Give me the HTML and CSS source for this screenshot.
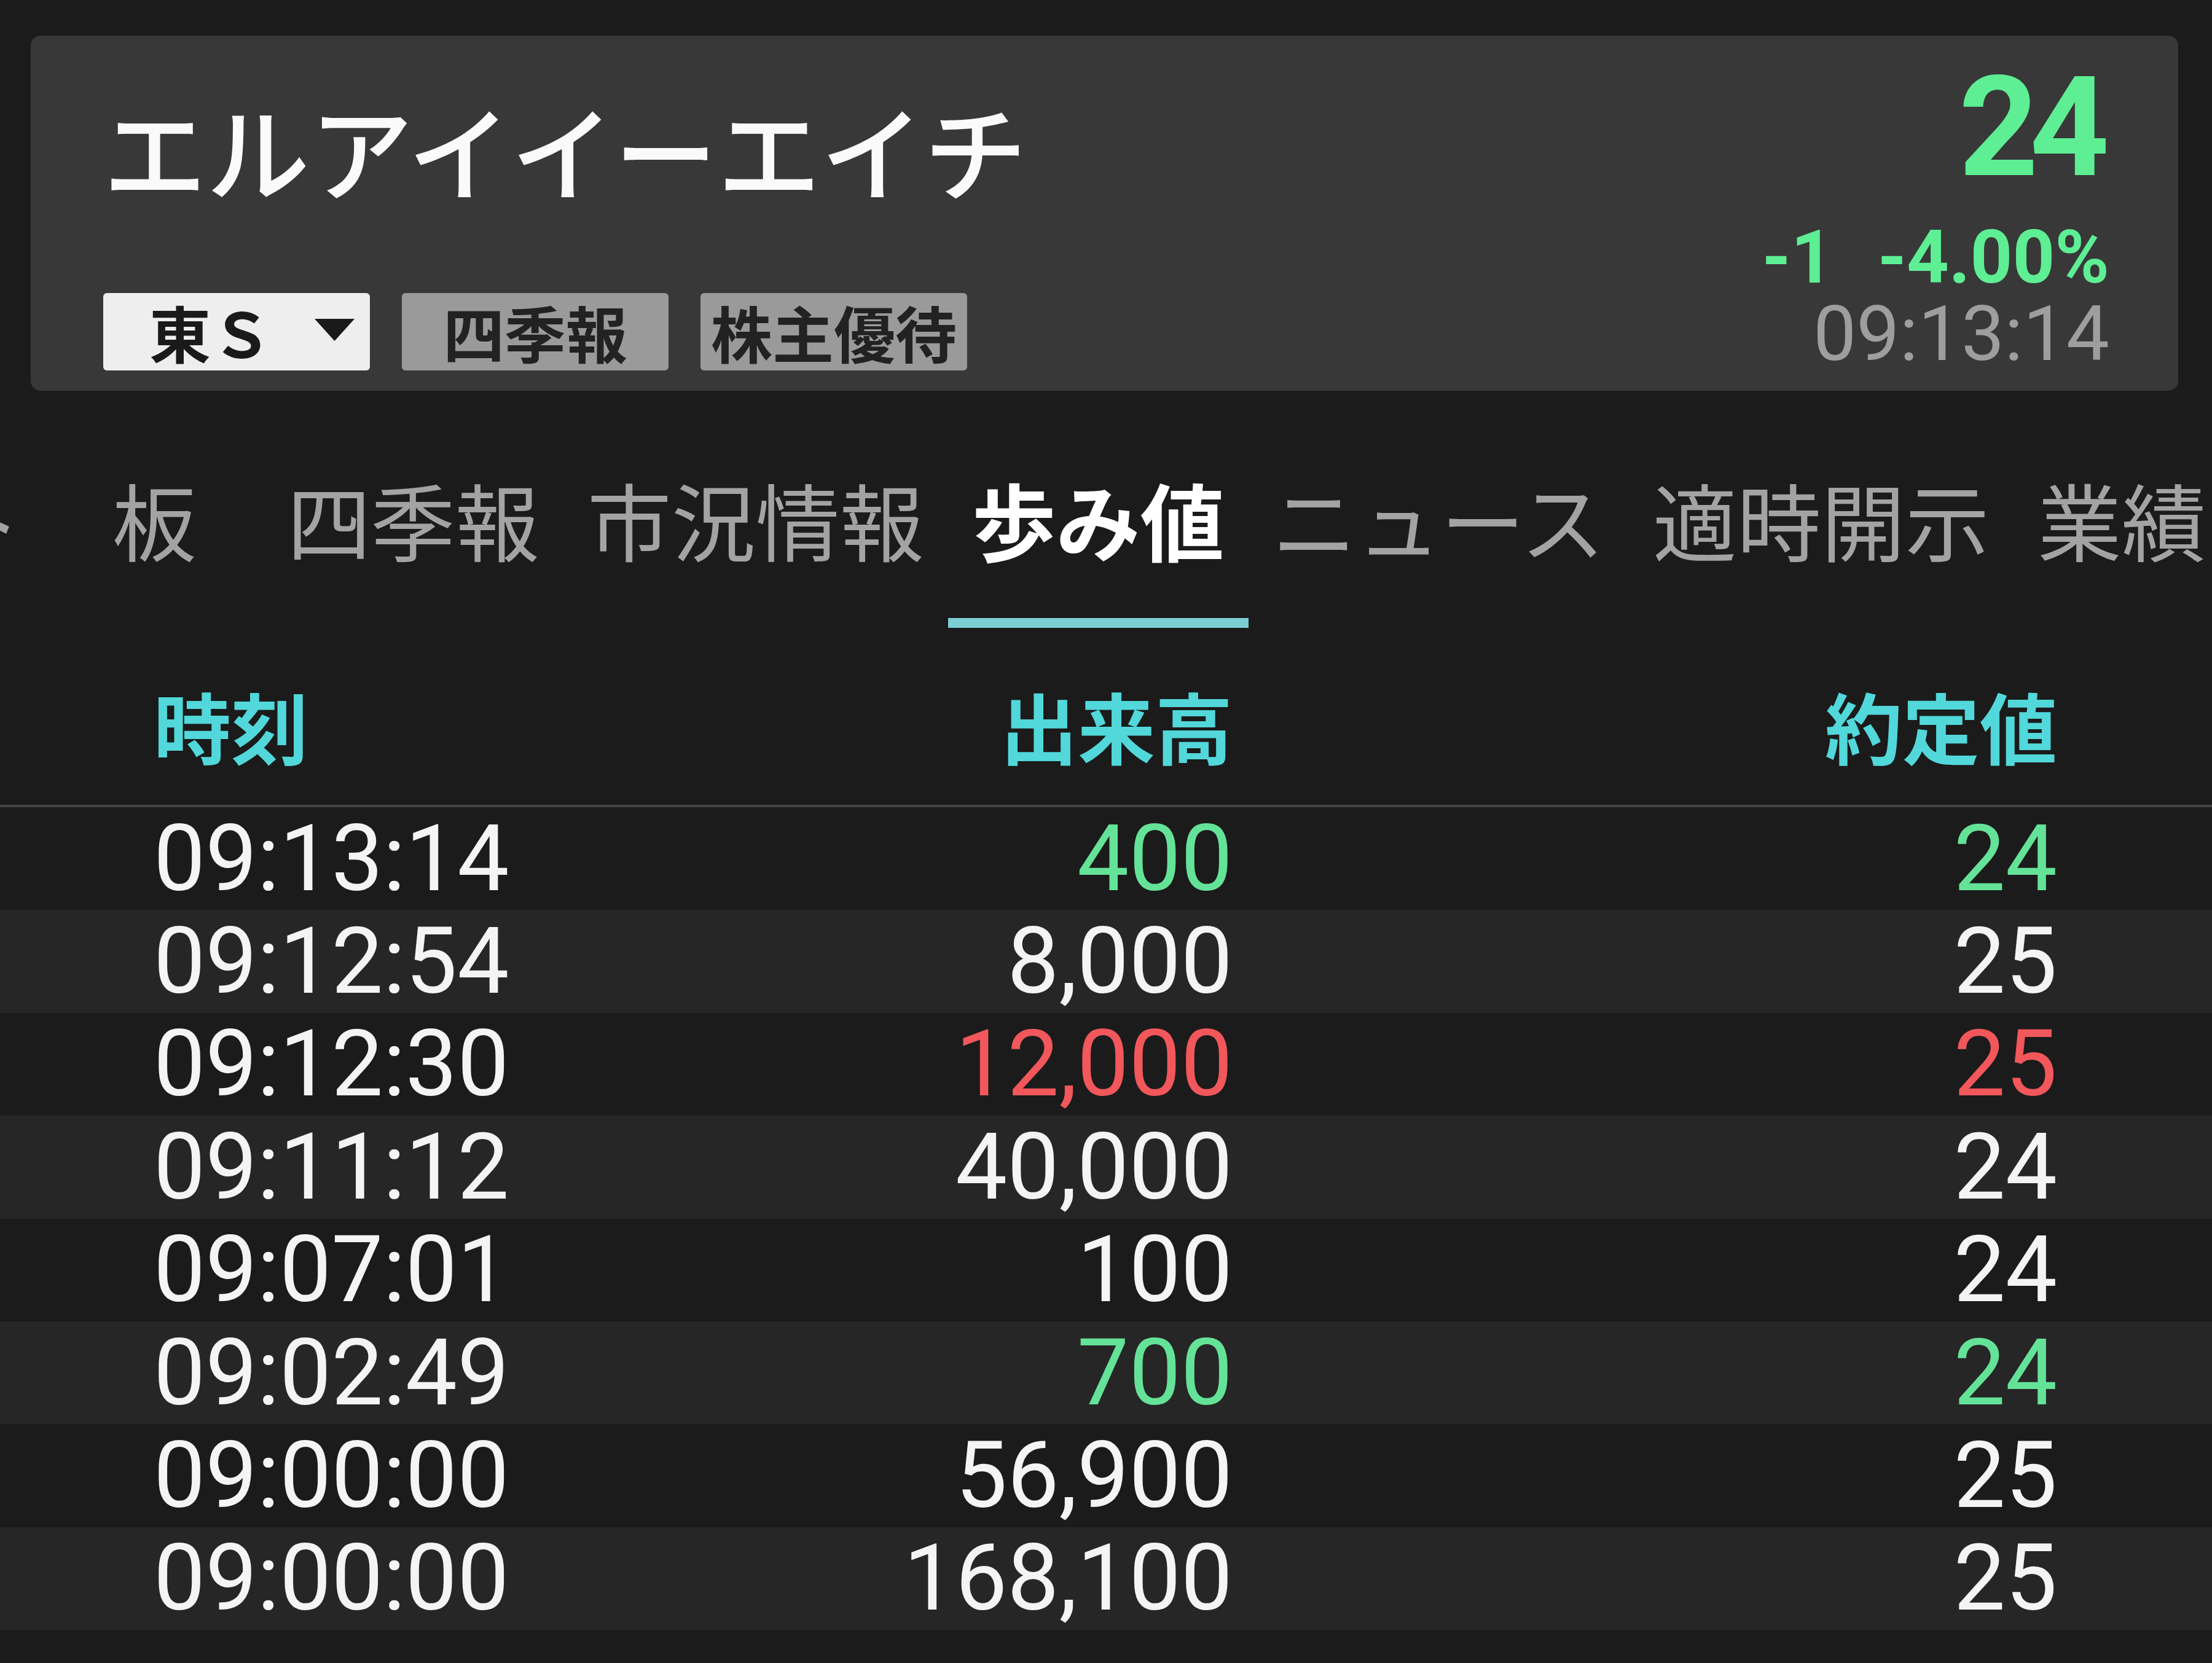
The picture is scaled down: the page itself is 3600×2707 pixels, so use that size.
FILE: index.html
```html
<!DOCTYPE html>
<html lang="ja">
<head>
<meta charset="utf-8">
<title>歩み値</title>
<link rel="stylesheet" href="styles.css">
</head>
<body>
<section class="card">
  <div class="card-left">
    <h1 class="name">エルアイイーエイチ</h1>
    <div class="badges">
      <div class="badge badge-market">
        <span class="market-text">東Ｓ</span>
        <svg class="caret" viewBox="0 0 65 36" width="65" height="36"><polygon points="0,0 65,0 32.5,36" fill="#1a1a1a"/></svg>
      </div>
      <div class="badge badge-gray">四季報</div>
      <div class="badge badge-gray">株主優待</div>
    </div>
  </div>
  <div class="card-right">
    <div class="price up">24</div>
    <div class="change up"><span>-1</span><span class="pct">-4.00%</span></div>
    <div class="quote-time">09:13:14</div>
  </div>
</section>

<nav class="tabbar">
  <div class="tabs">
    <div class="tab">チャート</div>
    <div class="tab tab-board">板</div>
    <div class="tab">四季報</div>
    <div class="tab">市況情報</div>
    <div class="tab active">歩み値</div>
    <div class="tab">ニュース</div>
    <div class="tab">適時開示</div>
    <div class="tab">業績</div>
  </div>
</nav>

<div class="thead">
  <div class="c-time">時刻</div>
  <div class="c-vol">出来高</div>
  <div class="c-price">約定値</div>
</div>

<div class="tbody">
  <div class="row"><div class="c-time">09:13:14</div><div class="c-vol up">400</div><div class="c-price up">24</div></div>
  <div class="row"><div class="c-time">09:12:54</div><div class="c-vol">8,000</div><div class="c-price">25</div></div>
  <div class="row"><div class="c-time">09:12:30</div><div class="c-vol down">12,000</div><div class="c-price down">25</div></div>
  <div class="row"><div class="c-time">09:11:12</div><div class="c-vol">40,000</div><div class="c-price">24</div></div>
  <div class="row"><div class="c-time">09:07:01</div><div class="c-vol">100</div><div class="c-price">24</div></div>
  <div class="row"><div class="c-time">09:02:49</div><div class="c-vol up">700</div><div class="c-price up">24</div></div>
  <div class="row"><div class="c-time">09:00:00</div><div class="c-vol">56,900</div><div class="c-price">25</div></div>
  <div class="row"><div class="c-time">09:00:00</div><div class="c-vol">168,100</div><div class="c-price">25</div></div>
</div>
</body>
</html>
```

FILE: styles.css
```css
html, body {
  margin: 0;
  padding: 0;
  background: #1b1b1b;
  width: 3600px;
  height: 2707px;
  overflow: hidden;
}

body {
  font-family: "Noto Sans CJK JP", "Roboto", sans-serif;
  color: #f4f4f4;
}

/* ---------- header card ---------- */
.card {
  box-sizing: border-box;
  margin: 58px 55px 0 50px;
  height: 578px;
  background: #383838;
  border-radius: 16px;
  display: flex;
  justify-content: space-between;
  padding: 0 112px 0 118px;
}

.card-left {
  display: flex;
  flex-direction: column;
  padding-top: 100px;
}

.name {
  margin: 0;
  font-family: "Noto Sans CJK JP", sans-serif;
  font-size: 168px;
  line-height: 1;
  font-weight: 500;
  color: #fafafa;
  white-space: nowrap;
}

.badges {
  display: flex;
  gap: 52px;
  margin-top: 151px;
}

.badge {
  box-sizing: border-box;
  width: 434px;
  height: 126px;
  border-radius: 6px;
  display: flex;
  align-items: center;
  justify-content: center;
  font-family: "Noto Sans CJK JP", sans-serif;
  font-size: 100px;
  line-height: 1;
  font-weight: 700;
  color: #222222;
}

.badge-market {
  background: #eeeeee;
  justify-content: flex-start;
  padding-left: 75px;
  color: #1a1a1a;
}

.caret {
  display: block;
  margin-left: 69px;
  margin-top: -6px;
}

.badge-gray {
  background: #9a9a9a;
}

.card-right {
  display: flex;
  flex-direction: column;
  align-items: flex-end;
  padding-top: 37px;
  font-family: "Roboto", sans-serif;
}

.price {
  font-size: 226px;
  line-height: 1;
  font-weight: 700;
  letter-spacing: -14px;
  margin-right: 14px;
}

.change {
  display: flex;
  margin-top: 38px;
  font-size: 120px;
  line-height: 1;
  font-weight: 700;
}

.change .pct {
  margin-left: 72px;
}

.quote-time {
  margin-top: 2px;
  font-size: 125px;
  line-height: 1;
  color: #9e9e9e;
}

.card .up { color: #5eee94; }

/* ---------- tabs ---------- */
.tabbar {
  margin-top: 140px;
}

.tabs {
  display: flex;
  margin-left: -550px;
  white-space: nowrap;
}

.tab {
  flex: none;
  font-family: "Noto Sans CJK JP", sans-serif;
  font-size: 137px;
  line-height: 1;
  font-weight: 400;
  color: #a3a3a3;
  padding: 0 39px 93px;
  border-bottom: 16px solid transparent;
}

.tab-board {
  padding-left: 108px;
  padding-right: 108px;
}

.tab.active {
  color: #ffffff;
  font-weight: 700;
  border-bottom-color: #7dced4;
}

/* ---------- table ---------- */
.thead,
.row {
  display: grid;
  grid-template-columns: 600px 1156px 1342px;
  padding: 0 252px 0 250px;
}

.thead {
  padding-top: 95px;
  padding-bottom: 67px;
  border-bottom: 4px solid #444444;
  font-family: "Noto Sans CJK JP", sans-serif;
  font-size: 126px;
  line-height: 1;
  font-weight: 700;
  color: #52d7da;
}

.c-time { text-align: left; }
.c-vol { text-align: right; }
.c-price { text-align: right; }

.row {
  height: 167.4px;
  align-items: center;
  font-family: "Roboto", sans-serif;
  font-size: 150px;
  line-height: 1;
  color: #f4f4f4;
  background: #1b1b1b;
}

.row:nth-child(even) {
  background: #262626;
}

.row .up { color: #64e398; }
.row .down { color: #f1575b; }
```
